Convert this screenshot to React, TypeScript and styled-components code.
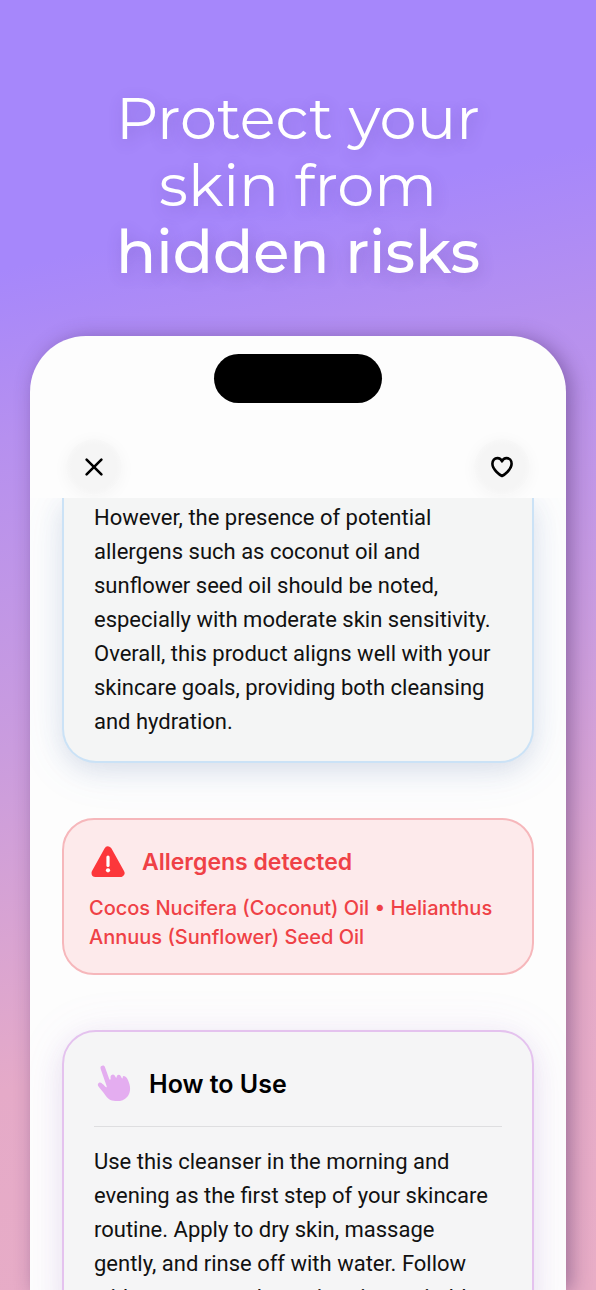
import React from "react";
import styled, { createGlobalStyle, css } from "styled-components";

const GlobalStyle = createGlobalStyle`
  *, *::before, *::after { box-sizing: border-box; }
  body {
    margin: 0;
    font-family: Inter, "Liberation Sans", sans-serif;
    color: #111;
  }
  h1, h2, p { margin: 0; }
`;

const Stage = styled.main`
  display: flex;
  flex-direction: column;
  height: 100vh;
  overflow: hidden;
  padding: 85px 30px 0;
  background: linear-gradient(168deg, #a687fb 0%, #a687fb 19%, #b690ef 31%, #ca9cde 53%, #e5aac8 77%, #e8adc6 100%);
`;

const Headline = styled.h1`
  font-family: Montserrat, Inter, sans-serif;
  font-size: 59px;
  line-height: 67px;
  text-align: center;
  color: #fff;
  text-shadow: 2px 4px 16px rgba(70, 40, 130, 0.24);
`;

const HeadlineRow = styled.span<{ $strong?: boolean }>`
  display: block;
  font-weight: ${(p) => (p.$strong ? 500 : 400)};
`;

const Phone = styled.section`
  display: flex;
  flex-direction: column;
  flex: 1;
  min-height: 0;
  margin-top: 50px;
  overflow: hidden;
  border-radius: 56px 56px 0 0;
  background: #fdfdfd;
  box-shadow: 5px 2px 20px rgba(60, 30, 90, 0.42);
`;

const TopArea = styled.header`
  display: flex;
  flex-direction: column;
  align-items: center;
  gap: 36px;
  flex: none;
  height: 162px;
  padding: 18px 36px 0;
`;

const Island = styled.div`
  width: 168px;
  height: 49px;
  border-radius: 25px;
  background: #000;
`;

const Toolbar = styled.div`
  display: flex;
  align-items: center;
  justify-content: space-between;
  align-self: stretch;
`;

const RoundButton = styled.button`
  display: grid;
  place-items: center;
  width: 56px;
  height: 56px;
  padding: 0;
  border: 0;
  border-radius: 50%;
  background: radial-gradient(circle closest-side, #f5f5f5 80%, #f8f8f8 100%);
  box-shadow: 0 2px 16px rgba(0, 0, 0, 0.04);
  color: #000;
  cursor: pointer;
`;

const Content = styled.div`
  display: flex;
  flex-direction: column;
  flex: 1;
  gap: 55px;
  min-height: 0;
  overflow: hidden;
  padding: 0 32px;
`;

type Tone = "sky" | "orchid";

const tones = {
  sky: css`
    border-color: #cbe2f6;
    box-shadow: 0 8px 24px rgba(60, 80, 120, 0.13), 0 4px 50px rgba(90, 150, 230, 0.1);
  `,
  orchid: css`
    border-color: #e4c2ee;
    box-shadow: 0 8px 24px rgba(90, 60, 140, 0.1), 0 4px 50px rgba(180, 110, 230, 0.1);
  `,
};

const Card = styled.article<{ $tone: Tone; $continued?: boolean }>`
  flex: none;
  padding: 28px 30px 22px;
  border: 2px solid;
  border-radius: 34px;
  background: #f5f5f6;
  ${(p) => tones[p.$tone]}
  ${(p) =>
    p.$continued &&
    css`
      padding-top: 3px;
      border-top: 0;
      border-radius: 0 0 34px 34px;
      background: #f4f5f5;
    `}
`;

const Copy = styled.p`
  font-family: Roboto, Inter, sans-serif;
  font-size: 22px;
  line-height: 34px;
`;

const Row = styled.span`
  display: block;
  white-space: nowrap;
`;

const CardHeader = styled.header`
  display: flex;
  align-items: center;
  gap: 16px;
  height: 67px;
  padding: 0 0 18px 2px;
  border-bottom: 1px solid #dedee0;
  margin-bottom: 18px;
`;

const CardTitle = styled.h2`
  font-size: 25px;
  font-weight: 600;
  line-height: 32px;
  color: #000;
`;

const Alert = styled.article`
  flex: none;
  padding: 25px 25px 21px;
  border: 2px solid #f6b7bb;
  border-radius: 32px;
  background: #fdeaeb;
  color: #ef4146;
`;

const AlertHeader = styled.header`
  display: flex;
  align-items: center;
  gap: 17px;
  padding-left: 2px;
  margin-bottom: 15px;
`;

const AlertTitle = styled.h2`
  font-size: 23px;
  font-weight: 600;
  line-height: 34px;
`;

const AlertText = styled.p`
  font-size: 20px;
  font-weight: 500;
  line-height: 29px;
`;

const CloseIcon = () => (
  <svg width="20" height="20" viewBox="0 0 20 20" fill="none" stroke="currentColor" strokeWidth="2.6" strokeLinecap="round" aria-hidden="true">
    <path d="M2.6 2.6 17.4 17.4M17.4 2.6 2.6 17.4" />
  </svg>
);

const HeartIcon = () => (
  <svg width="24" height="22" viewBox="0 0 24 22" fill="none" stroke="currentColor" strokeWidth="2.6" strokeLinejoin="round" aria-hidden="true">
    <path d="M12 20C10.6 19.400 2.400 13.900 2.400 7.800c0-3.300 2.200-5.700 5-5.700 2 0 3.700 1.100 4.600 3.200.9-2.100 2.600-3.200 4.600-3.200 2.800 0 5 2.400 5 5.700 0 6.100-8.200 11.600-9.600 12.200Z" />
  </svg>
);

const WarningIcon = () => (
  <svg width="34" height="32" viewBox="0 0 34 32" aria-hidden="true">
    <path d="M17 4.500 29.500 27H4.500Z" fill="#fc373b" stroke="#fc373b" strokeWidth="8" strokeLinejoin="round" />
    <path d="M17 11v8.500" stroke="#fff" strokeWidth="3.200" strokeLinecap="round" />
    <circle cx="17" cy="24.300" r="2.100" fill="#fff" />
  </svg>
);

const PointingHandIcon = () => (
  <svg width="37" height="40" viewBox="18 24 111 120" aria-hidden="true">
    <path
      d="M32 39C30 32 33 29 37 29c4-1 7 1 8 5l13 36c1 2 4 1 4-1-1-7-1-12 5-13 5-1 8 3 10 8 1 2 3 1 3-1 0-4 2-7 6-7 5 0 7 4 9 10 1 2 3 2 3 0 0-4 1-6 4-6 7 1 11 9 15 20 5 14 5 30-5 42-9 11-22 14-36 13-15-1-24-8-31-19-6-10-14-17-19-24-4-5-3-10 1-12 5-2 8 1 12 5l8 8c2 2 4 1 3-2Z"
      fill="#e4adf0"
    />
  </svg>
);

const summary = [
  "However, the presence of potential",
  "allergens such as coconut oil and",
  "sunflower seed oil should be noted,",
  "especially with moderate skin sensitivity.",
  "Overall, this product aligns well with your",
  "skincare goals, providing both cleansing",
  "and hydration.",
];

const directions = [
  "Use this cleanser in the morning and",
  "evening as the first step of your skincare",
  "routine. Apply to dry skin, massage",
  "gently, and rinse off with water. Follow",
  "with a serum and a moisturizer suitable",
];

const Lines = ({ rows }: { rows: string[] }) => (
  <>
    {rows.map((row) => (
      <Row key={row}>{row} </Row>
    ))}
  </>
);

export default function App() {
  return (
    <>
      <GlobalStyle />
      <Stage>
        <Headline>
          <HeadlineRow>Protect your </HeadlineRow>
          <HeadlineRow>skin from </HeadlineRow>
          <HeadlineRow $strong>hidden risks</HeadlineRow>
        </Headline>
        <Phone>
          <TopArea>
            <Island />
            <Toolbar>
              <RoundButton type="button" aria-label="Close">
                <CloseIcon />
              </RoundButton>
              <RoundButton type="button" aria-label="Add to favourites">
                <HeartIcon />
              </RoundButton>
            </Toolbar>
          </TopArea>
          <Content>
            <Card $tone="sky" $continued>
              <Copy>
                <Lines rows={summary} />
              </Copy>
            </Card>
            <Alert>
              <AlertHeader>
                <WarningIcon />
                <AlertTitle>Allergens detected</AlertTitle>
              </AlertHeader>
              <AlertText>
                <Lines rows={["Cocos Nucifera (Coconut) Oil • Helianthus", "Annuus (Sunflower) Seed Oil"]} />
              </AlertText>
            </Alert>
            <Card $tone="orchid">
              <CardHeader>
                <PointingHandIcon />
                <CardTitle>How to Use</CardTitle>
              </CardHeader>
              <Copy>
                <Lines rows={directions} />
              </Copy>
            </Card>
          </Content>
        </Phone>
      </Stage>
    </>
  );
}
